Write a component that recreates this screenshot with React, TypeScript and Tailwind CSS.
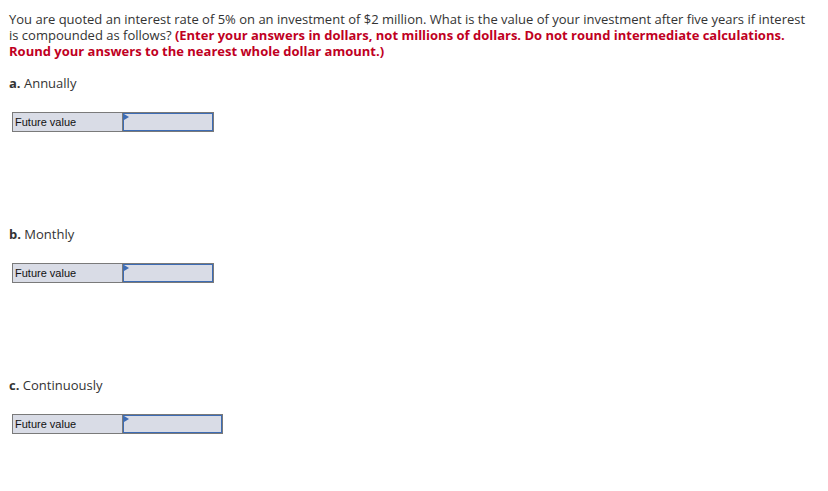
import React from 'react';

const parts = [
  { letter: 'a.', label: 'Annually', inputW: 'w-[90px]' },
  { letter: 'b.', label: 'Monthly', inputW: 'w-[90px]' },
  { letter: 'c.', label: 'Continuously', inputW: 'w-[99px]' },
];

function AnswerRow({ inputW }: { inputW: string }) {
  return (
    <div className="ml-[3px] flex h-[20px] w-fit border border-[#7a7a7a] bg-[#d9dce6]">
      <div className="flex w-[110px] items-center border-r border-[#7a7a7a] pl-[2px] text-[11px] text-[#111]"
        style={{ fontFamily: '"Liberation Sans", Arial, sans-serif' }}>
        Future value
      </div>
      <div className={`relative ${inputW} border border-[#3d6cb4] bg-[#d9dce6]`}>
        <svg className="absolute left-0 top-0" width="5" height="6" viewBox="0 0 5 6">
          <path d="M0 0 L5 3 L0 6 Z" fill="#3d6cb4" />
        </svg>
      </div>
    </div>
  );
}

export default function App() {
  return (
    <div className="bg-white px-[9px] pt-[11px] text-[13px] leading-4 text-[#333]"
      style={{ fontFamily: '"Open Sans", "Noto Sans", sans-serif' }}>
      <p className="whitespace-nowrap">
        You are quoted an interest rate of 5% on an investment of $2 million. What is the value of your investment after five years if interest<br />
        is compounded as follows?{' '}
        <b className="text-[#c0001f]">(Enter your answers in dollars, not millions of dollars. Do not round intermediate calculations.<br />
        Round your answers to the nearest whole dollar amount.)</b>
      </p>
      {parts.map((p, i) => (
        <div key={p.letter} className={i === 0 ? 'mt-[16px]' : 'mt-[94px]'}>
          <div><b>{p.letter}</b> {p.label}</div>
          <div className="mt-[21px]">
            <AnswerRow inputW={p.inputW} />
          </div>
        </div>
      ))}
      <div className="h-[56px]" />
    </div>
  );
}
